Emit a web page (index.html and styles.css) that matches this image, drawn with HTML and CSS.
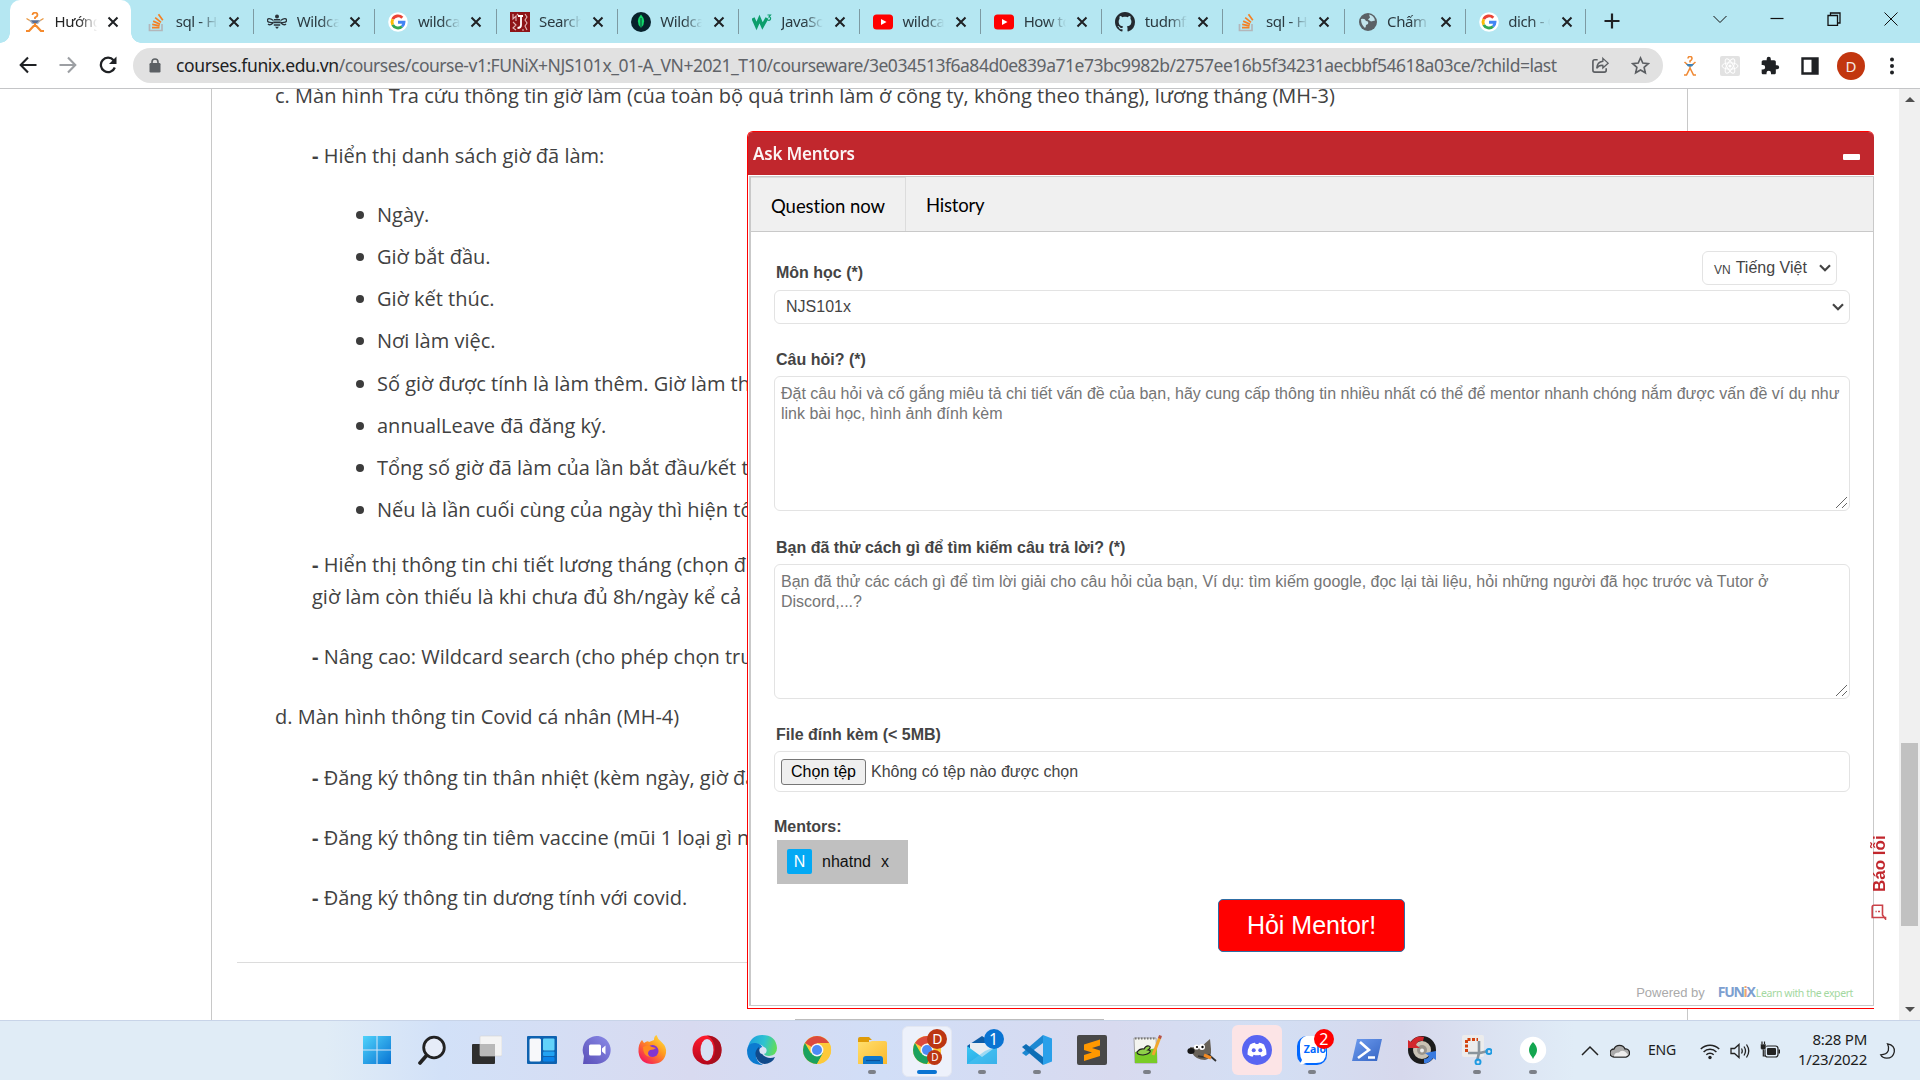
FILE: index.html
```html
<!DOCTYPE html>
<html lang="vi">
<head>
<meta charset="utf-8">
<title>Hướng dẫn</title>
<link rel="stylesheet" href="styles.css">
</head>
<body>
<svg width="0" height="0" class="defs">
  <defs>
    <linearGradient id="gWin" x1="0" y1="0" x2="1" y2="1"><stop offset="0" stop-color="#4fd3fb"/><stop offset="1" stop-color="#0873d3"/></linearGradient>
    <linearGradient id="gChat" x1="1" y1="0" x2="0" y2="1"><stop offset="0" stop-color="#8b8ce8"/><stop offset="1" stop-color="#5a4fb8"/></linearGradient>
    <linearGradient id="gFox" x1="1" y1="0" x2="0.2" y2="1"><stop offset="0" stop-color="#fff14a"/><stop offset="0.45" stop-color="#ff9a1f"/><stop offset="1" stop-color="#f5115d"/></linearGradient>
    <linearGradient id="gOp" x1="0" y1="0" x2="0" y2="1"><stop offset="0" stop-color="#ff1b2d"/><stop offset="1" stop-color="#b5061b"/></linearGradient>
    <linearGradient id="gEdge" x1="0" y1="0.3" x2="1" y2="0.5"><stop offset="0" stop-color="#1a9ee0"/><stop offset="0.55" stop-color="#2fc3d0"/><stop offset="1" stop-color="#62dd57"/></linearGradient>
    <linearGradient id="gFold" x1="0" y1="0" x2="1" y2="1"><stop offset="0" stop-color="#ffdf6e"/><stop offset="1" stop-color="#fcb92b"/></linearGradient>
    <linearGradient id="gMail" x1="0" y1="0" x2="1" y2="1"><stop offset="0" stop-color="#3dc8f4"/><stop offset="1" stop-color="#1f9ee0"/></linearGradient>
    <linearGradient id="gPs" x1="0" y1="0" x2="1" y2="1"><stop offset="0" stop-color="#6d9bee"/><stop offset="1" stop-color="#3565c4"/></linearGradient>
    <symbol id="x" viewBox="0 0 12 12"><path d="M1.5 1.5l9 9M10.500 1.500l-9 9" stroke="#1f2124" stroke-width="2" fill="none"/></symbol>
    <symbol id="funix" viewBox="0 0 20 20"><path d="M7.500 3q0-2.300 2.500-2.300T12.500 3q0 1.500-2.500 2.500V7" stroke="#f58a2d" stroke-width="1.800" fill="none"/><path d="M1.500 6.500l5 3h7l5-3" stroke="#e9973f" stroke-width="1.300" fill="none"/><path d="M4 8h12l-3 4H7z" fill="#a9b1bf"/><path d="M6 8.500h8l-2 2.500H8z" fill="#5a6f96"/><path d="M10 11v2M10 12.500l-6 6.500H1M10 12.500l6 6.500H19" stroke="#f58a2d" stroke-width="2.200" fill="none"/></symbol>
    <symbol id="so" viewBox="0 0 20 20"><path d="M3.500 12v6.500h12.500V12" stroke="#b3b6ba" stroke-width="1.700" fill="none"/><path d="M6 15.700h7.500M6.200 12.400l7.400 1.500M7.200 9.100l6.900 3.100M9.200 5.700l5.800 4.700M12.500 2.300l4.300 6" stroke="#f48024" stroke-width="1.700"/></symbol>
    <symbol id="bee" viewBox="0 0 20 20"><g fill="#2b343b"><circle cx="10" cy="4.500" r="2"/><path d="M7 7h6v1.600H7zM6.300 9.500h7.400v1.800H6.300zM6.800 12.200h6.400v1.600H6.800zM8 14.700h4L10 17z"/></g><path d="M6.500 8.500Q1 5 .5 8t6 2.500M1 12q2 2 5-1M13.500 8.500Q19 5 19.500 8t-6 2.500M19 12q-2 2-5-1" fill="none" stroke="#2b343b" stroke-width="1.300"/></symbol>
    <symbol id="google" viewBox="0 0 20 20"><circle cx="10" cy="10" r="9.800" fill="#fff"/><g fill="none" stroke-width="2.900"><path d="M14.300 5.700A6 6 0 0 0 4.700 7.200" stroke="#ea4335"/><path d="M4.700 7.200a6 6 0 0 0 0 5.600" stroke="#fbbc05"/><path d="M4.700 12.800a6 6 0 0 0 9.300 1.700" stroke="#34a853"/><path d="M14 14.500a6 6 0 0 0 2-4.300h-6" stroke="#4285f4"/></g></symbol>
    <symbol id="tuts" viewBox="0 0 20 20"><path d="M0 0h20v20H0z" fill="#8e1417"/><path d="M3 2v5l3-3v5M3 10l3 3-3 3 3 2M15 2l2 3-2 3 2 3-2 3 2 4M7 2l2 2M12 18h2" stroke="#e3b9b9" stroke-width="1.100" fill="none"/><path d="M8 4h5M11 4v9q0 3-3.500 3" stroke="#fff" stroke-width="1.800" fill="none"/></symbol>
    <symbol id="mongo" viewBox="0 0 20 20"><circle cx="10" cy="10" r="10" fill="#06212b"/><path d="M10 2.500q6.500 7 0 13.500-6.500-6.500 0-13.500z" fill="#10d669"/><path d="M10 6v11" stroke="#06212b" stroke-width=".8"/></symbol>
    <symbol id="w3" viewBox="0 0 20 20"><path d="M1 6l3.500 8L7.500 7l3 7L15 6" stroke="#0b9e6c" stroke-width="3.400" fill="none"/><path d="M15.500 3h3l-1.500 2q2 0 1.500 2t-3 1" stroke="#0b9e6c" stroke-width="1.200" fill="none"/></symbol>
    <symbol id="yt" viewBox="0 0 20 20"><rect y="2.500" width="20" height="15" rx="3.500" fill="#f00"/><path d="M8 7l5.500 3L8 13z" fill="#fff"/></symbol>
    <symbol id="gh" viewBox="0 0 16 16"><path fill="#24292f" d="M8 0C3.580 0 0 3.580 0 8c0 3.540 2.290 6.530 5.470 7.590.4.070.55-.17.55-.38 0-.19-.01-.82-.01-1.490-2.010.37-2.530-.49-2.690-.94-.09-.23-.48-.94-.82-1.130-.28-.15-.68-.52-.01-.53.63-.01 1.080.58 1.230.82.72 1.210 1.870.87 2.330.66.07-.52.28-.87.51-1.070-1.780-.2-3.640-.89-3.640-3.950 0-.87.31-1.590.82-2.150-.08-.2-.36-1.020.08-2.120 0 0 .67-.21 2.200.82.64-.18 1.320-.27 2-.27s1.360.09 2 .27c1.530-1.040 2.200-.82 2.200-.82.44 1.100.16 1.920.08 2.120.51.56.82 1.270.82 2.150 0 3.070-1.870 3.750-3.650 3.950.29.25.54.73.54 1.480 0 1.070-.01 1.930-.01 2.200 0 .21.15.46.55.38A8.010 8.010 0 0 0 16 8c0-4.420-3.580-8-8-8z"/></symbol>
    <symbol id="globe" viewBox="0 0 20 20"><circle cx="10" cy="10" r="9" fill="#5b6166"/><path d="M3 7q4-1 5 2 3 0 2 3l-2 1q0 2-1 3-4-3-4-9zM11 2.500q5 1 6 6l-4 1-3-2 2-2z" fill="#c3e4ec"/></symbol>
    <symbol id="chrome" viewBox="0 0 30 30"><circle cx="15" cy="15" r="14" fill="#fc3"/><path d="M15 15L2.900 8A14 14 0 0 1 27.100 8H15z" fill="#dc4a3d"/><path d="M2.900 8A14 14 0 0 0 15 29l6-10.500L15 15 9 18.500z" fill="#1aa15f"/><path d="M15 8.500h12.500A14 14 0 0 1 15 29l6-11z" fill="#fdc93a"/><circle cx="15" cy="15" r="6.400" fill="#f4f6fa"/><circle cx="15" cy="15" r="5" fill="#4c8bf5"/></symbol>
  </defs>
</svg>

<header class="tabs">
  <div class="tab active"><svg><use href="#funix"/></svg><span>Hướng dẫn</span><svg class="x"><use href="#x"/></svg></div>
  <div class="tab"><svg><use href="#so"/></svg><span>sql - How</span><svg class="x"><use href="#x"/></svg></div>
  <div class="tab"><svg><use href="#bee"/></svg><span>Wildcard</span><svg class="x"><use href="#x"/></svg></div>
  <div class="tab"><svg><use href="#google"/></svg><span>wildcard</span><svg class="x"><use href="#x"/></svg></div>
  <div class="tab"><svg><use href="#tuts"/></svg><span>Search a</span><svg class="x"><use href="#x"/></svg></div>
  <div class="tab"><svg><use href="#mongo"/></svg><span>Wildcard</span><svg class="x"><use href="#x"/></svg></div>
  <div class="tab"><svg><use href="#w3"/></svg><span>JavaScript</span><svg class="x"><use href="#x"/></svg></div>
  <div class="tab"><svg><use href="#yt"/></svg><span>wildcard</span><svg class="x"><use href="#x"/></svg></div>
  <div class="tab"><svg><use href="#yt"/></svg><span>How to u</span><svg class="x"><use href="#x"/></svg></div>
  <div class="tab"><svg><use href="#gh"/></svg><span>tudmfx</span><svg class="x"><use href="#x"/></svg></div>
  <div class="tab"><svg><use href="#so"/></svg><span>sql - How</span><svg class="x"><use href="#x"/></svg></div>
  <div class="tab"><svg><use href="#globe"/></svg><span>Chấm b</span><svg class="x"><use href="#x"/></svg></div>
  <div class="tab"><svg><use href="#google"/></svg><span>dich - G</span><svg class="x"><use href="#x"/></svg></div>
  <svg class="plus" viewBox="0 0 16 16"><path d="M8 .5v15M.5 8h15" stroke="#1f2124" stroke-width="2.200"/></svg>
  <div class="winctl">
    <svg viewBox="0 0 14 14"><path d="M.5 4L7 10.500 13.500 4" fill="none" stroke="#111"/></svg>
    <svg viewBox="0 0 14 14"><path d="M.5 6.500h13" stroke="#111" stroke-width="1.200"/></svg>
    <svg viewBox="0 0 14 14"><path d="M1 3.500h9.500v10H1zM3.500 3.500V1H13v10h-2.500" fill="none" stroke="#111" stroke-width="1.300"/></svg>
    <svg viewBox="0 0 14 14"><path d="M.5 .5l13 13M13.500 .5l-13 13" stroke="#111"/></svg>
  </div>
</header>

<div class="toolbar">
  <div class="nav">
    <svg viewBox="0 0 18 18"><path d="M17.500 9H2M9 1.500L1.700 9 9 16.500" fill="none" stroke="#1f2124" stroke-width="2.100"/></svg>
    <svg viewBox="0 0 18 18"><path d="M.5 9H16M9 1.500L16.300 9 9 16.500" fill="none" stroke="#9c9fa3" stroke-width="2.100"/></svg>
    <svg viewBox="0 0 18 18"><path d="M15.800 11.500A7.200 7.200 0 1 1 14.600 4.300" fill="none" stroke="#1f2124" stroke-width="2.300"/><path d="M17.500 .5v7.500H10z" fill="#1f2124"/></svg>
  </div>
  <div class="omni">
    <svg class="lock" viewBox="0 0 12 15"><rect x=".5" y="5" width="11" height="9.500" rx="1.200" fill="#5c6064"/><path d="M3 6V4a3 3 0 0 1 6 0v2" fill="none" stroke="#5c6064" stroke-width="1.600"/></svg>
    <div class="url"><b>courses.funix.edu.vn</b>/courses/course-v1:FUNiX+NJS101x_01-A_VN+2021_T10/courseware/3e034513f6a84d0e839a71e73bc9982b/2757ee16b5f34231aecbbf54618a03ce/?child=last</div>
    <svg class="oi" viewBox="0 0 20 20"><path d="M7 4H4a2 2 0 0 0-2 2v9a2 2 0 0 0 2 2h10a2 2 0 0 0 2-2v-2" fill="none" stroke="#5b5e62" stroke-width="1.700"/><path d="M12.500 2.500l5.500 5-5.500 5V9.800Q8 9.500 6 13q.3-6.700 6.500-7.500z" fill="none" stroke="#5b5e62" stroke-width="1.400"/></svg>
    <svg class="oi star" viewBox="0 0 20 20"><path d="M10 2l2.400 5.400 5.800.6-4.400 3.900 1.300 5.800L10 14.700l-5.100 3 1.300-5.800L1.800 8l5.800-.6z" fill="none" stroke="#5b5e62" stroke-width="1.700"/></svg>
  </div>
  <div class="ext">
    <svg viewBox="0 0 20 20"><path d="M8 2.500q0-2 2-2t2 2q0 1.500-2 2.500v1.500M4.500 6l3.500 3h4l3.500-3M10 8v4l-3.500 7H4M10 12l3.500 7H16" stroke="#f08a35" stroke-width="1.600" fill="none"/><path d="M6 8h8l-2 2.500H8z" fill="#3e82b8"/></svg>
    <svg viewBox="0 0 20 20"><rect width="20" height="20" rx="2" fill="#e2e2e2"/><g fill="none" stroke="#fff"><ellipse cx="10" cy="10" rx="8" ry="3.200"/><ellipse cx="10" cy="10" rx="8" ry="3.200" transform="rotate(60 10 10)"/><ellipse cx="10" cy="10" rx="8" ry="3.200" transform="rotate(120 10 10)"/></g><circle cx="10" cy="10" r="1.600" fill="#fff"/></svg>
    <svg viewBox="0 0 24 24"><path fill="#1f2124" d="M20.500 11H19V7c0-1.100-.9-2-2-2h-4V3.500a2.500 2.500 0 0 0-5 0V5H4c-1.100 0-2 .9-2 2v3.800h1.500a2.700 2.700 0 0 1 0 5.400H2V20c0 1.100.9 2 2 2h3.800v-1.500a2.700 2.700 0 0 1 5.400 0V22H17c1.100 0 2-.9 2-2v-4h1.500a2.500 2.500 0 0 0 0-5z"/></svg>
    <svg viewBox="0 0 20 20"><path d="M2.500 2.500h15v15h-15z" fill="none" stroke="#1f2124" stroke-width="2.400"/><path d="M11.500 2h6v16h-6z" fill="#1f2124"/></svg>
    <span class="avatar">D</span>
    <svg viewBox="0 0 20 20"><g fill="#1f2124"><circle cx="10" cy="3.500" r="2"/><circle cx="10" cy="10" r="2"/><circle cx="10" cy="16.500" r="2"/></g></svg>
  </div>
</div>

<main class="view">
  <article class="doc">
    <p class="first">c. Màn hình Tra cứu thông tin giờ làm (của toàn bộ quá trình làm ở công ty, không theo tháng), lương tháng (MH-3)</p>
    <p class="sub"><b>-</b> Hiển thị danh sách giờ đã làm:</p>
    <ul>
      <li>Ngày.</li>
      <li>Giờ bắt đầu.</li>
      <li>Giờ kết thúc.</li>
      <li>Nơi làm việc.</li>
      <li>Số giờ được tính là làm thêm. Giờ làm thêm</li>
      <li>annualLeave đã đăng ký.</li>
      <li>Tổng số giờ đã làm của lần bắt đầu/kết thúc</li>
      <li>Nếu là lần cuối cùng của ngày thì hiện tổng</li>
    </ul>
    <p class="sub pay"><b>-</b> Hiển thị thông tin chi tiết lương tháng (chọn để<br>giờ làm còn thiếu là khi chưa đủ 8h/ngày kể cả đã</p>
    <p class="sub"><b>-</b> Nâng cao: Wildcard search (cho phép chọn trường</p>
    <p>d. Màn hình thông tin Covid cá nhân (MH-4)</p>
    <p class="sub covid"><b>-</b> Đăng ký thông tin thân nhiệt (kèm ngày, giờ đăng</p>
    <p class="sub"><b>-</b> Đăng ký thông tin tiêm vaccine (mũi 1 loại gì ngày</p>
    <p class="sub"><b>-</b> Đăng ký thông tin dương tính với covid.</p>
    <hr>
  </article>
  <aside class="scroll"><svg viewBox="0 0 12 6"><path d="M0 6l6-6 6 6z" fill="#505050"/></svg><i></i><svg class="dn" viewBox="0 0 12 6"><path d="M0 0l6 6 6-6z" fill="#505050"/></svg></aside>
  <i class="edge"></i>

  <section class="modal">
    <div class="mhead"><span>Ask Mentors</span><i></i></div>
    <div class="mbox">
      <div class="mtabs"><span class="on">Question now</span><span>History</span></div>
      <div class="form">
        <div class="lang"><small>VN</small> Tiếng Việt<svg viewBox="0 0 12 8"><path d="M1 1.200l5 5 5-5" fill="none" stroke="#444" stroke-width="2.200"/></svg></div>
        <label>Môn học (*)</label>
        <div class="field sel">NJS101x<svg viewBox="0 0 12 8"><path d="M1 1.200l5 5 5-5" fill="none" stroke="#444" stroke-width="2.200"/></svg></div>
        <label class="l2">Câu hỏi? (*)</label>
        <div class="field area">Đặt câu hỏi và cố gắng miêu tả chi tiết vấn đề của bạn, hãy cung cấp thông tin nhiều nhất có thể để mentor nhanh chóng nắm được vấn đề ví dụ như<br>link bài học, hình ảnh đính kèm<svg viewBox="0 0 11 11"><path d="M0 11L11 0M6 11l5-5" stroke="#555" stroke-width=".9"/></svg></div>
        <label class="l3">Bạn đã thử cách gì để tìm kiếm câu trả lời? (*)</label>
        <div class="field area">Bạn đã thử các cách gì để tìm lời giải cho câu hỏi của bạn, Ví dụ: tìm kiếm google, đọc lại tài liệu, hỏi những người đã học trước và Tutor ở<br>Discord,...?<svg viewBox="0 0 11 11"><path d="M0 11L11 0M6 11l5-5" stroke="#555" stroke-width=".9"/></svg></div>
        <label class="l3 lf">File đính kèm (&lt; 5MB)</label>
        <div class="field file"><span>Chọn tệp</span>Không có tệp nào được chọn</div>
        <label class="l4">Mentors:</label>
        <div class="chip"><b>N</b><span>nhatnd</span><span>x</span></div>
        <div class="ask">Hỏi Mentor!</div>
        <div class="pow"><span>Powered by</span><b>FUN<em>i</em>X</b><small>Learn with the expert</small></div>
      </div>
    </div>
  </section>
  <div class="report"><span>Báo lỗi</span><svg viewBox="0 0 16 16"><path d="M1.200 13.500V3Q1.200 1.200 3 1.200h8.500V11L14.500 15v-1.500z" fill="none" stroke="#cb4148" stroke-width="1.600"/><path d="M4.500 7.500h1.200M7 7.500h2" stroke="#cb4148" stroke-width="1.600"/></svg></div>
</main>

<footer class="task">
  <div class="apps">
    <div><svg viewBox="0 0 30 30"><path d="M1 1h13.500v13.500H1zM15.500 1H29v13.500H15.500zM1 15.500h13.500V29H1zM15.500 15.500H29V29H15.500z" fill="url(#gWin)"/></svg></div>
    <div><svg viewBox="0 0 30 30"><circle cx="17" cy="12.500" r="10.300" fill="#e6ecf8" stroke="#222" stroke-width="2.800"/><path d="M9.500 20.500L3 28" stroke="#222" stroke-width="3.600" stroke-linecap="round"/></svg></div>
    <div><svg viewBox="0 0 30 30"><rect x="0" y="9" width="23" height="20" rx="1" fill="#2e2e2e"/><rect x="8" y="1" width="22" height="20" rx="1" fill="#f4f4f4" stroke="#d5d5d5" stroke-width=".6"/><path d="M8 9h15v12H8z" fill="#b9b9b9"/></svg></div>
    <div><svg viewBox="0 0 30 30"><rect y="1" width="30" height="28" rx="1" fill="#0e62b0"/><rect x="2.500" y="3.500" width="11.500" height="23" rx="1.500" fill="#f7f8fa"/><rect x="16" y="3.500" width="11.500" height="12" rx="1" fill="#62d3fa"/><rect x="16" y="16.500" width="11.500" height="4.500" rx="1" fill="#22a3f2"/><rect x="16" y="22" width="11.500" height="4.500" rx="1" fill="#0a83e8"/></svg></div>
    <div><svg viewBox="0 0 30 30"><path d="M1 29l1-8A14 14 0 1 1 15 29z" fill="url(#gChat)"/><rect x="7" y="9.500" width="12" height="11" rx="1.500" fill="#fff"/><path d="M20 13.500l3.500-3v9L20 16.500z" fill="#fff"/></svg></div>
    <div><svg viewBox="0 0 30 30"><path d="M1.500 17Q1 9 5 5l2 3Q11 5 12 7l5-2q0-4 2.500-5 1 4 5 7Q30 12 29 18 27 29 15 29 3 29 1.500 17z" fill="url(#gFox)"/><circle cx="15.500" cy="16" r="6" fill="#8135d0"/><path d="M6 12q5-3 9 0l4 1q-2 2-6 2-4 3 0 7-7-1-7-10z" fill="#ff8a20"/></svg></div>
    <div><svg viewBox="0 0 30 30"><ellipse cx="15" cy="15" rx="14.500" ry="14.500" fill="url(#gOp)"/><path d="M15 .5q14.500 1 14.500 14.500T15 29.500q8-4 8-14.500T15 .5z" fill="#a8101f"/><ellipse cx="15" cy="15" rx="6.500" ry="11" fill="#d8e0f4"/></svg></div>
    <div><svg viewBox="0 0 30 30"><path d="M1 12Q4 0 15 0q14 0 15 13 0 7-8 8-6 0-5-4 2-6-5-8Q4 8 1 12z" fill="url(#gEdge)"/><path d="M0 15Q1 7 9 8q6 1 7 6-6-1-7 6 0 7 7 10Q0 30 0 15z" fill="#0c7bd0"/><path d="M12 12q-6 5-2 12 5 8 14 3 3-2 4-5-5 2-9 0-6-3-7-10z" fill="#114a8b"/><circle cx="16" cy="15.500" r="3.600" fill="#d9e2f5"/></svg></div>
    <div><svg><use href="#chrome"/></svg></div>
    <div class="run"><svg viewBox="0 0 30 30"><path d="M1 4q0-2 2-2h9l3 3h-3v4H1z" fill="#df9b08"/><path d="M1 7h11l3-1h13q2 0 2 2v21H1z" fill="url(#gFold)"/><path d="M6 29v-5q0-3 3-3h14q3 0 3 3v5z" fill="#0f78cc"/><path d="M9 25.500h14" stroke="#0a4f96" stroke-width="1.200"/></svg></div>
    <div class="cur"><svg><use href="#chrome"/></svg><em class="d1">D</em><em class="d2">D</em></div>
    <div class="run"><svg viewBox="0 0 30 30"><path d="M0 11L15 1l15 10v4H0z" fill="#0f5ea8"/><path d="M3 8h24v8l-12 6L3 16z" fill="#e9edf2"/><path d="M0 11l15 11 15-11v18H0z" fill="url(#gMail)"/><path d="M0 29l18-13 12-5v18z" fill="#52c5f3" opacity=".5"/></svg><em class="n1">1</em></div>
    <div class="run"><svg viewBox="0 0 30 30"><path d="M21 0l9 3.500v23L21 30z" fill="#2aa0ea"/><path d="M21 0v8L4 21l-4-3z" fill="#1c88d2"/><path d="M21 30v-8L4 9l-4 3z" fill="#0d6eb6"/></svg></div>
    <div><svg viewBox="0 0 30 30"><rect width="30" height="30" rx="2" fill="#484848"/><path d="M7 9.500l16-5v6l-8 2.600 8 2.400v5.500l-16 5v-6l8-2.500-8-2.500z" fill="#ff9800"/></svg></div>
    <div class="run"><svg viewBox="0 0 30 30"><path d="M2 3h22l1 25H3z" fill="#f4f5f0" stroke="#888" stroke-width=".7"/><path d="M3 17l22-4v15H3z" fill="#79cc27"/><path d="M3 3.500h21" stroke="#777" stroke-dasharray="1.500 1.500" stroke-width="2"/><path d="M5 17q3-4 7-3 2-4 5-3t-1 4q3 0 2 2t-7 3q-6 0-6-3z" fill="#8fd04a" stroke="#222" stroke-width="1.200"/><path d="M28 2l-7 18" stroke="#f0a72d" stroke-width="3"/><path d="M28.500 .5l-1 3" stroke="#b5524a" stroke-width="3"/></svg></div>
    <div><svg viewBox="0 0 30 30"><path d="M3 12q8 1 12-1l8-7 1 10q1 10-6 11-9 0-13-7z" fill="#686259"/><ellipse cx="4" cy="16" rx="3.600" ry="3" fill="#161616"/><circle cx="9.500" cy="12" r="2.600" fill="#fff"/><circle cx="15" cy="12" r="3" fill="#fff"/><circle cx="10" cy="12" r="1.100"/><circle cx="15.500" cy="12" r="1.200"/><path d="M11 21q7 2 11-1l7 6" stroke="#333" stroke-width="1.800" fill="none"/><path d="M17 20l7 3" stroke="#f38a22" stroke-width="3"/></svg></div>
    <div class="disc"><svg viewBox="0 0 30 30"><circle cx="15" cy="15" r="15" fill="#5865f2"/><path d="M8 9.500q3-2 5-1.800l.7 1.300h2.600l.7-1.300q2-.2 5 1.800 2.700 5 2.500 10-2.500 2-5 2.300l-1.200-2q-3.300 1-6.600 0l-1.200 2Q8 21.500 5.500 19.500q-.2-5 2.500-10z" fill="#fff"/><circle cx="11.700" cy="15.300" r="2" fill="#5865f2"/><circle cx="18.300" cy="15.300" r="2" fill="#5865f2"/></svg></div>
    <div class="run zalo"><svg viewBox="0 0 30 30"><rect y="1" width="30" height="29" rx="10" fill="#0068ff"/><path d="M9 1h11q9 0 9 9v8q0 10-10 10H9q-4 2-6 1l2-4q-2-3-2-8V9q0-6 6-8z" fill="#fff"/></svg><u>Zalo</u><em class="n2">2</em></div>
    <div><svg viewBox="0 0 30 30"><path d="M5 4h25l-5 22H0z" fill="url(#gPs)"/><path d="M8 7l9 8-11 8M16 22.500h7" fill="none" stroke="#fff" stroke-width="2.600"/></svg></div>
    <div><svg viewBox="0 0 30 30"><circle cx="15" cy="15" r="11.500" fill="#c9c2b4" stroke="#1c1c1c" stroke-width="5"/><circle cx="15" cy="15" r="5" fill="#99948c"/><circle cx="15" cy="15.500" r="2" fill="#eee"/><path d="M1 5l3 2Q9 0 17 2l-1 4q-5-1-7 4l4 3H1z" fill="#d3272c"/><path d="M29 25l-3-2q-4 6-9 5l0-4q4 0 5-3l-4-3 11-2z" fill="#3a7be0"/></svg></div>
    <div class="run"><svg viewBox="0 0 30 30"><rect width="22" height="22" rx="2" fill="#ececec"/><path d="M4.500 17V4.500H16" fill="none" stroke="#d4420d" stroke-width="3" stroke-dasharray="3 1.500"/><path d="M17 6v12L15 26M6 18h12l8-2" fill="none" stroke="#8a949c" stroke-width="2.600"/><circle cx="27" cy="16.500" r="2.600" fill="none" stroke="#1e9be2" stroke-width="2"/><circle cx="16" cy="27" r="2.500" fill="none" stroke="#1e9be2" stroke-width="2"/></svg></div>
    <div class="run"><svg viewBox="0 0 30 30"><circle cx="15" cy="15" r="13.200" fill="#fff"/><path d="M15 7q8 8 0 16-8-8 0-16z" fill="#13a650"/><path d="M15 21v2.500" stroke="#13a650"/></svg></div>
  </div>
  <div class="tray">
    <svg viewBox="0 0 20 20"><path d="M2 14l8-8 8 8" fill="none" stroke="#222" stroke-width="1.500"/></svg>
    <svg viewBox="0 0 20 20"><path d="M4 16a4 4 0 0 1 0-8 6 6 0 0 1 11 0 4 4 0 0 1 1 8z" fill="#aaa" stroke="#222" stroke-width="1.300"/><path d="M4 15.500q0-4 5-4 2-3 6-1l3 3-2 2z" fill="#eee"/></svg>
    <span class="eng">ENG</span>
    <svg class="wifi" viewBox="0 0 20 20"><g fill="none" stroke="#222" stroke-width="1.500"><path d="M.8 8a13 13 0 0 1 18.400 0M3.600 11a9 9 0 0 1 12.800 0M6.300 13.800a5.200 5.200 0 0 1 7.400 0"/></g><circle cx="10" cy="16.500" r="1.700" fill="#222"/></svg>
    <svg class="vol" viewBox="0 0 20 20"><path d="M1 7.500h3.500L9 3.500v13l-4.500-4H1zM11.500 7.500q1.500 2.500 0 5M14 5.500q3 4.500 0 9M16.500 3.500q4.500 6.500 0 13" fill="none" stroke="#222" stroke-width="1.300"/></svg>
    <svg class="bat" viewBox="0 0 20 20"><rect x="5" y="5" width="13" height="11" rx="2.500" fill="none" stroke="#222" stroke-width="1.200"/><rect x="7" y="7" width="9" height="7" rx="1" fill="#222"/><path d="M18.500 8.500H20v4h-1.500z" fill="#222"/><path d="M.5 3H6v4q0 2-2.700 2T.5 7z" fill="#222" stroke="#e0ecf7" stroke-width=".5"/><path d="M2 .5V3M4.500 .5V3M3.300 9v6h2" fill="none" stroke="#222" stroke-width="1.200"/></svg>
    <div class="clock">8:28 PM<br>1/23/2022</div>
    <svg class="moon" viewBox="0 0 20 20"><path d="M10 1.500Q19 3 18 11q-1.500 7.500-9 7.500-5 0-7-4 7 0 9-5 1-4-1-8z" fill="none" stroke="#222" stroke-width="1.500"/></svg>
  </div>
</footer>
</body>
</html>
```
FILE: styles.css
```css
* { box-sizing: border-box; }
body { margin: 0; width: 1920px; height: 1080px; overflow: hidden; background: #fff; font-family: "Liberation Sans", Arial, sans-serif; display: flex; flex-direction: column; }
svg { display: block; flex: none; }
.defs { position: absolute; }

.tabs { height: 43px; flex: none; background: #b5e7f2; display: flex; padding-left: 10px; font: 15px/20px "Noto Sans", sans-serif; letter-spacing: -.4px; color: #2b3a40; }
.tab { width: 121.150px; height: 43px; display: flex; align-items: center; padding-left: 15px; flex: none; position: relative; }
.tab svg { width: 20px; height: 20px; }
.tab span { width: 43px; margin: 0 9.500px 0 9.500px; padding-bottom: 1px; overflow: hidden; white-space: nowrap; mask-image: linear-gradient(90deg, #000 55%, transparent 98%); }
.tab svg.x { width: 12px; height: 12px; }
.tab + .tab:not(:nth-child(2))::before { content: ""; position: absolute; left: 1px; top: 9px; width: 1px; height: 25px; background: #7d9aa2; }
.tab:nth-child(13)::after { content: ""; position: absolute; right: -1px; top: 9px; width: 1px; height: 25px; background: #7d9aa2; }
.tab.active { background: #fff; border-radius: 10px 10px 0 0; color: #222; }
.tab.active::before, .tab.active::after { content: ""; position: absolute; bottom: 0; width: 10px; height: 10px; left: -10px; background: radial-gradient(circle at 0 0, transparent 9.500px, #fff 10px); }
.tab.active::after { left: auto; right: -10px; background: radial-gradient(circle at 100% 0, transparent 9.500px, #fff 10px); }
.plus { width: 16px; height: 16px; margin: 13px 0 0 19px; }
.winctl { margin: 12px 22px 0 auto; display: flex; gap: 43px; }
.winctl svg { width: 14px; height: 14px; }

.toolbar { height: 46px; flex: none; display: flex; align-items: center; border-bottom: 1px solid #c4c5c7; padding: 0 18px 0 19px; }
.nav { display: flex; gap: 22px; width: 116px; padding-bottom: 1px; }
.nav svg { width: 18px; height: 18px; }
.omni { width: 1530px; height: 35px; flex: none; border-radius: 18px; background: #e1e1e1; display: flex; align-items: center; padding: 0 0 0 16px; }
.lock { width: 12px; height: 15px; margin-right: 15px; }
.url { width: 1402px; flex: none; padding-bottom: 1px; font: 17.500px/24px "Noto Sans", sans-serif; letter-spacing: -.49px; color: #606368; white-space: nowrap; }
.url b { font-weight: 400; color: #202124; letter-spacing: -.38px; }
.oi { width: 19px; height: 19px; margin-left: 13px; }
.oi.star { margin-left: 21px; }
.ext { display: flex; align-items: center; gap: 20px; margin-left: 17px; }
.ext svg { width: 20px; height: 20px; }
.avatar { width: 28px; height: 28px; margin: 0 -3px; border-radius: 50%; background: #c2360f; color: #f6e9e4; font: 15px/28px "Noto Sans", sans-serif; text-align: center; }

.view { height: 931px; flex: none; position: relative; overflow: hidden; display: flex; }
.doc { width: 1477px; margin-left: 211px; border: solid #c8c8c8; border-width: 0 1px; padding: 0 25px 0 63px; font: 20px/32px "Open Sans", sans-serif; color: #414141; white-space: nowrap; overflow: hidden; }
.doc p { margin: 28px 0 0; }
.doc p.first { margin-top: -9px; }
.doc p.sub { padding-left: 37px; }
.doc p.pay { margin-top: 23px; }
.doc p.covid { margin-top: 29px; }
.doc ul { margin: 27px 0 0; padding: 0; list-style: none; }
.doc li { height: 32px; margin-bottom: 10.140px; padding-left: 81px; display: flex; align-items: center; }
.doc li::before { content: ""; width: 8px; height: 8px; border-radius: 50%; background: #3c3c3c; margin-right: 13px; }
.doc li:last-child { margin-bottom: 0; }
.doc hr { border: 0; border-top: 1px solid #dcdcdc; margin: 48px 0 0 -38px; }
.scroll { width: 21px; margin-left: auto; background: #f0f0f0; display: flex; flex-direction: column; align-items: center; padding: 8px 0; }
.scroll svg { width: 10px; height: 5px; }
.scroll i { width: 17px; height: 183px; background: #c1c1c1; margin-top: 641px; }
.scroll .dn { margin-top: auto; }
.edge { position: absolute; left: 795px; bottom: 0; width: 309px; height: 1px; background: #bdbdbd; }

.modal { position: absolute; left: 747px; top: 42px; width: 1127px; height: 878px; background: #fff; border: 1px solid #f00; border-right: 0; border-radius: 6px 6px 0 0; overflow: hidden; display: flex; flex-direction: column; }
.mhead { height: 43px; flex: none; background: #c1272d; color: #fff; font: 600 17px/23px "Noto Sans", sans-serif; letter-spacing: -.2px; display: flex; justify-content: space-between; padding: 10px 14px 0 5px; }
.mhead span { opacity: .95; }
.mhead i { width: 17px; height: 6px; margin-top: 12px; border-radius: 1px; background: #fff; }
.mbox { margin: 1px 0 2px 1px; flex: 1; border: 1px solid #c9c9c9; border-left-width: 2px; }
.mtabs { height: 55px; background: #f0f0f0; border-bottom: 1px solid #c9c9c9; display: flex; font: 18.500px/56px Lato, sans-serif; color: #000; }
.mtabs span { padding-left: 20px; letter-spacing: -.2px; }
.mtabs .on { width: 155px; border: solid #dcdcdc; border-width: 1px 1px 0 0; letter-spacing: -.05px; }
.form { position: relative; padding: 31px 23px 0 23px; color: #444; font-size: 16px; line-height: 20px; display: flex; flex-direction: column; white-space: nowrap; }
.form label { font-weight: 700; padding-left: 2px; height: 20px; margin-bottom: 7px; color: #444; }
.form .l2 { margin-top: 26px; margin-bottom: 6px; }
.form .l3 { margin-top: 27px; margin-bottom: 6px; }
.form .lf { margin-top: 26px; }
.form .l4 { padding-left: 0; margin-top: 25px; margin-bottom: 3px; }
.field { border: 1px solid #e3e3e3; border-radius: 6px; height: 34px; }
.form svg { width: 12px; height: 8px; }
.sel { display: flex; justify-content: space-between; align-items: center; padding: 0 5px 0 11px; }
.area { position: relative; height: 135px; padding: 7px 0 0 6px; color: #757575; }
.form .area svg { position: absolute; right: 2px; bottom: 2px; width: 11px; height: 11px; }
.file { height: 41px; display: flex; align-items: center; padding-left: 6px; }
.file span { width: 85px; height: 26px; border: 1px solid #767676; border-radius: 3px; background: #efefef; color: #000; text-align: center; line-height: 23px; margin-right: 5px; }
.lang { position: absolute; left: 951px; top: 19px; width: 135px; height: 34px; border: 1px solid #e3e3e3; border-radius: 6px; display: flex; align-items: center; padding: 0 5px 0 11px; }
.lang small { font-size: 12px; padding-top: 3px; margin-right: 5px; }
.lang svg { margin-left: auto; }
.chip { margin-left: 3px; width: 131px; height: 44px; background: #c0c0c0; display: flex; align-items: center; padding: 0 0 1px 10px; color: #111; gap: 10px; }
.chip b { width: 25px; height: 25px; border-radius: 2px; background: #03a9f4; color: #fff; font-weight: 400; text-align: center; line-height: 25px; }
.ask { width: 187px; height: 53px; margin: 15px 0 0 444px; border: 1px solid #2e6da4; border-radius: 5px; background: #f00; color: #fff; font-size: 25px; line-height: 51px; text-align: center; }
.pow { display: flex; align-items: baseline; justify-content: flex-end; margin: 30px -3px 0 0; color: #aaa; font-size: 13px; line-height: 22px; }
.pow b { color: #7d9fd0; font: 700 14px "Open Sans", sans-serif; margin-left: 13px; letter-spacing: -1.300px; width: 36px; }
.pow em { color: #f0a56f; font-style: normal; }
.pow small { color: #a3d8a0; font: 10.500px "Noto Sans", sans-serif; letter-spacing: -.4px; margin-left: 2px; }
.report { position: absolute; left: 1870px; top: 743px; width: 22px; display: flex; flex-direction: column; align-items: flex-start; color: #c1272d; }
.report span { writing-mode: vertical-rl; transform: rotate(180deg); font: 700 17px/20px "Liberation Sans", sans-serif; height: 60px; }
.report svg { width: 16px; height: 16px; margin: 12px 0 0 1px; }

.task { height: 60px; flex: none; display: flex; background: linear-gradient(90deg, #e0ecf6 0, #e0ecf6 17%, #d2e1f8 23%, #d8daf0 36%, #d1def7 46%, #d8daef 58%, #d3dff4 66%, #d6d8ec 73%, #e0ecf7 82%, #e0ecf7 100%); border-top: 1px solid #c8d4e8; }
.apps { display: flex; padding-left: 349px; }
.apps > div { width: 55.050px; height: 59px; display: flex; justify-content: center; padding-top: 14px; position: relative; }
.apps svg { width: 30px; height: 30px; z-index: 1; }
.run::after, .cur::after { content: ""; position: absolute; bottom: 6px; width: 8px; height: 4px; border-radius: 2px; background: #7c8088; }
.apps .cur::after { width: 20px; background: #0a74d2; }
.cur::before, .disc::before { content: ""; position: absolute; left: 3px; top: 5px; width: 48px; height: 49px; border-radius: 6px; background: #edf1fb; border: 1px solid #e3e7f2; }
.disc::before { background: #fce4e6; border: 0; height: 50px; top: 4px; left: 2px; width: 50px; }
.apps em { position: absolute; z-index: 2; border-radius: 50%; background: #bc3612; color: #fff; font: 14px/20px "Noto Sans", sans-serif; width: 20px; height: 20px; text-align: center; }
.apps .d1 { left: 28px; top: 8px; }
.apps .d2 { left: 28px; top: 29px; width: 15px; height: 15px; font-size: 10px; line-height: 15px; }
.apps .n1 { left: 29px; top: 8px; background: #0a74d2; font-size: 16px; }
.apps .n2 { left: 29px; top: 8px; background: #f00; font-size: 16px; }
.apps u { position: absolute; z-index: 2; left: 19px; top: 19px; font: 700 10.500px/18px "Open Sans", sans-serif; color: #0068ff; text-decoration: none; }
.tray { flex: 1; display: flex; align-items: center; color: #1c1c1c; font: 15px/20px "Noto Sans", sans-serif; padding: 0 24px 0 20px; letter-spacing: -.25px; }
.tray svg { width: 20px; height: 20px; }
.tray svg + svg { margin-left: 10px; }
.tray .eng { margin-left: 18px; width: 31px; padding-bottom: 1px; font-size: 14px; }
.tray .wifi { margin-left: 21px; }
.tray .vol, .tray .bat { margin-left: 10px; }
.clock { margin-left: auto; padding-bottom: 4px; text-align: right; }
.tray .moon { width: 17px; margin-left: 12px; }
```
